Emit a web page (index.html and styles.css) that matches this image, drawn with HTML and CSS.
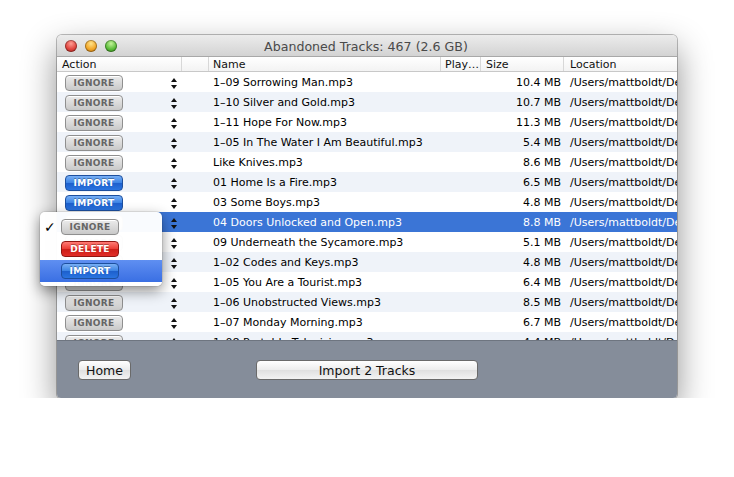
FILE: index.html
```html
<!DOCTYPE html>
<html>
<head>
<meta charset="utf-8">
<link rel="stylesheet" href="styles.css">
</head>
<body>
<div class="window">
  <div class="titlebar">
    <div class="lights">
      <span class="light red"></span><span class="light yellow"></span><span class="light green"></span>
    </div>
    <div class="title">Abandoned Tracks: 467 (2.6 GB)</div>
  </div>
  <div class="table">
    <div class="row head">
      <div class="c action">Action</div><div class="c blank"></div><div class="c name">Name</div><div class="c play">Play…</div><div class="c size">Size</div><div class="c loc">Location</div>
    </div>
    <div class="body">
      <div class="row"><div class="c action"><span class="pill ignore">IGNORE</span><span class="step"></span></div><div class="c blank"></div><div class="c name">1–09 Sorrowing Man.mp3</div><div class="c play"></div><div class="c size">10.4 MB</div><div class="c loc">/Users/mattboldt/Desktop</div></div>
      <div class="row alt"><div class="c action"><span class="pill ignore">IGNORE</span><span class="step"></span></div><div class="c blank"></div><div class="c name">1–10 Silver and Gold.mp3</div><div class="c play"></div><div class="c size">10.7 MB</div><div class="c loc">/Users/mattboldt/Desktop</div></div>
      <div class="row"><div class="c action"><span class="pill ignore">IGNORE</span><span class="step"></span></div><div class="c blank"></div><div class="c name">1–11 Hope For Now.mp3</div><div class="c play"></div><div class="c size">11.3 MB</div><div class="c loc">/Users/mattboldt/Desktop</div></div>
      <div class="row alt"><div class="c action"><span class="pill ignore">IGNORE</span><span class="step"></span></div><div class="c blank"></div><div class="c name">1–05 In The Water I Am Beautiful.mp3</div><div class="c play"></div><div class="c size">5.4 MB</div><div class="c loc">/Users/mattboldt/Desktop</div></div>
      <div class="row"><div class="c action"><span class="pill ignore">IGNORE</span><span class="step"></span></div><div class="c blank"></div><div class="c name">Like Knives.mp3</div><div class="c play"></div><div class="c size">8.6 MB</div><div class="c loc">/Users/mattboldt/Desktop</div></div>
      <div class="row alt"><div class="c action"><span class="pill import">IMPORT</span><span class="step"></span></div><div class="c blank"></div><div class="c name">01 Home Is a Fire.mp3</div><div class="c play"></div><div class="c size">6.5 MB</div><div class="c loc">/Users/mattboldt/Desktop</div></div>
      <div class="row"><div class="c action"><span class="pill import">IMPORT</span><span class="step"></span></div><div class="c blank"></div><div class="c name">03 Some Boys.mp3</div><div class="c play"></div><div class="c size">4.8 MB</div><div class="c loc">/Users/mattboldt/Desktop</div></div>
      <div class="row sel"><div class="c action"><span class="pill ignore">IGNORE</span><span class="step"></span></div><div class="c blank"></div><div class="c name">04 Doors Unlocked and Open.mp3</div><div class="c play"></div><div class="c size">8.8 MB</div><div class="c loc">/Users/mattboldt/Desktop</div></div>
      <div class="row"><div class="c action"><span class="pill ignore">IGNORE</span><span class="step"></span></div><div class="c blank"></div><div class="c name">09 Underneath the Sycamore.mp3</div><div class="c play"></div><div class="c size">5.1 MB</div><div class="c loc">/Users/mattboldt/Desktop</div></div>
      <div class="row alt"><div class="c action"><span class="pill ignore">IGNORE</span><span class="step"></span></div><div class="c blank"></div><div class="c name">1–02 Codes and Keys.mp3</div><div class="c play"></div><div class="c size">4.8 MB</div><div class="c loc">/Users/mattboldt/Desktop</div></div>
      <div class="row"><div class="c action"><span class="pill ignore">IGNORE</span><span class="step"></span></div><div class="c blank"></div><div class="c name">1–05 You Are a Tourist.mp3</div><div class="c play"></div><div class="c size">6.4 MB</div><div class="c loc">/Users/mattboldt/Desktop</div></div>
      <div class="row alt"><div class="c action"><span class="pill ignore">IGNORE</span><span class="step"></span></div><div class="c blank"></div><div class="c name">1–06 Unobstructed Views.mp3</div><div class="c play"></div><div class="c size">8.5 MB</div><div class="c loc">/Users/mattboldt/Desktop</div></div>
      <div class="row"><div class="c action"><span class="pill ignore">IGNORE</span><span class="step"></span></div><div class="c blank"></div><div class="c name">1–07 Monday Morning.mp3</div><div class="c play"></div><div class="c size">6.7 MB</div><div class="c loc">/Users/mattboldt/Desktop</div></div>
      <div class="row alt"><div class="c action"><span class="pill ignore">IGNORE</span><span class="step"></span></div><div class="c blank"></div><div class="c name">1–08 Portable Television.mp3</div><div class="c play"></div><div class="c size">4.4 MB</div><div class="c loc">/Users/mattboldt/Desktop</div></div>
    </div>
  </div>
  <div class="footer">
    <button class="btn home">Home</button>
    <button class="btn importbtn">Import 2 Tracks</button>
  </div>
  <div class="menu">
    <div class="mi"><span class="check">✓</span><span class="pill ignore">IGNORE</span></div>
    <div class="mi"><span class="check"></span><span class="pill delete">DELETE</span></div>
    <div class="mi hl"><span class="check"></span><span class="pill import">IMPORT</span></div>
  </div>
</div>
</body>
</html>
```

FILE: styles.css
```css
html, body { margin: 0; padding: 0; background: #fff; }
body {
  padding: 35px 0 0 57px;
  font-family: "DejaVu Sans", "Liberation Sans", sans-serif;
  color: #000;
}
.window {
  position: relative;
  width: 620px;
  height: 363px;
  border-radius: 5px 5px 4px 4px;
  box-shadow: 0 14px 34px rgba(0,0,0,0.45), 0 0 0 1px rgba(0,0,0,0.25);
  display: flex;
  flex-direction: column;
  background: #fff;
}
.titlebar {
  height: 21px;
  border-bottom: 1px solid #a8a8a8;
  border-radius: 5px 5px 0 0;
  background: linear-gradient(#ececec, #d3d3d3);
  display: flex;
  align-items: center;
  position: relative;
}
.lights { display: flex; gap: 8px; padding-left: 8px; }
.light {
  width: 12px; height: 12px; border-radius: 50%;
  box-shadow: inset 0 0 0 1px rgba(0,0,0,0.3);
}
.red { background: radial-gradient(circle at 50% 30%, #ff9d94 0, #e0443e 55%, #a3211b 100%); }
.yellow { background: radial-gradient(circle at 50% 30%, #ffe38a 0, #f2a627 55%, #b46d10 100%); }
.green { background: radial-gradient(circle at 50% 30%, #c4f39a 0, #5bbd3a 55%, #2f7f17 100%); }
.title {
  flex: 1;
  text-align: center;
  font-size: 12.6px;
  color: #4a4a4a;
  margin-right: 62px;
  padding-top: 1px;
}
.table { height: 283px; overflow: hidden; display: flex; flex-direction: column; }
.row {
  display: grid;
  grid-template-columns: 125px 27px 232px 40px 83px 113px;
  height: 20px;
  align-items: center;
  font-size: 11px;
  white-space: nowrap;
}
.row.alt { background: #eff3f9; }
.row.sel { background: #3b75d6; color: #fff; }
.c { overflow: hidden; height: 100%; display: flex; align-items: center; }
.head {
  height: 14px;
  flex: none;
  border-bottom: 1px solid #c8c8c8;
  background: linear-gradient(#ffffff, #f3f3f3);
  font-size: 11px;
  color: #111;
}
.head .c { border-right: 1px solid #d8d8d8; padding-top: 1px; box-sizing: border-box; }
.head .c.loc { border-right: none; }
.head .action { padding-left: 5px; }
.head .name { padding-left: 4px; }
.head .play { padding-left: 4px; }
.head .size { padding-left: 5px; }
.head .loc { padding-left: 6px; }
.body { flex: 1; overflow: hidden; }
.body .c { padding-top: 1px; box-sizing: border-box; }
.body .name { padding-left: 4px; }
.body .size { justify-content: flex-end; padding-right: 3px; }
.body .loc { padding-left: 6px; }
.body .action { padding-left: 8px; }
.pill {
  box-sizing: border-box;
  width: 58px;
  height: 16px;
  border-radius: 4px;
  font-size: 9px;
  font-weight: bold;
  display: flex;
  align-items: center;
  justify-content: center;
  letter-spacing: 0.3px;
}
.ignore {
  background: linear-gradient(#ececec, #c9c9c9);
  border: 1px solid #8f8f8f;
  color: #666;
  box-shadow: inset 0 1px 0 #fff;
}
.import {
  background: linear-gradient(#79b0f5 0, #3a82e4 50%, #1d5fcc 51%, #2a74e0 100%);
  border: 1px solid #1d4f9e;
  color: #fff;
  text-shadow: 0 -1px 0 rgba(0,0,0,0.3);
}
.delete {
  background: linear-gradient(#ff7b74 0, #ea3a32 50%, #cc1d17 51%, #e12e28 100%);
  border: 1px solid #911612;
  color: #fff;
  text-shadow: 0 -1px 0 rgba(0,0,0,0.3);
}
.step {
  width: 0; height: 0;
  margin-left: 48px;
  position: relative;
  border-left: 3px solid transparent;
  border-right: 3px solid transparent;
  border-bottom: 4px solid #111;
  margin-top: -6px;
}
.step::after {
  content: "";
  position: absolute;
  left: -3px; top: 7px;
  border-left: 3px solid transparent;
  border-right: 3px solid transparent;
  border-top: 4px solid #111;
}
.footer {
  flex: 1;
  background: #858d9a;
  border-top: 1px solid #6e7580;
  border-radius: 0 0 4px 4px;
  display: flex;
  align-items: center;
  padding-left: 21px;
  gap: 125px;
}
.btn {
  height: 20px;
  box-sizing: border-box;
  border: 1px solid #6a6a6a;
  border-radius: 4px;
  background: linear-gradient(#ffffff, #ececec 50%, #e0e0e0 51%, #f3f3f3);
  font-family: "DejaVu Sans", "Liberation Sans", sans-serif;
  font-size: 12.5px;
  color: #111;
  padding: 0;
  margin-top: 1px;
}
.home { width: 53px; }
.importbtn { width: 222px; }
.menu {
  position: absolute;
  left: -17px;
  top: 177px;
  width: 122px;
  padding: 4px 0;
  background: rgba(255,255,255,0.97);
  border-radius: 5px;
  box-shadow: 0 5px 14px rgba(0,0,0,0.45), 0 0 0 1px rgba(0,0,0,0.08);
}
.mi {
  height: 22px;
  display: flex;
  align-items: center;
}
.mi.hl { background: linear-gradient(#5f8ff1, #3a6fe3); }
.check {
  width: 21px;
  padding-left: 4px;
  box-sizing: border-box;
  font-size: 14px;
  font-weight: bold;
}
```
